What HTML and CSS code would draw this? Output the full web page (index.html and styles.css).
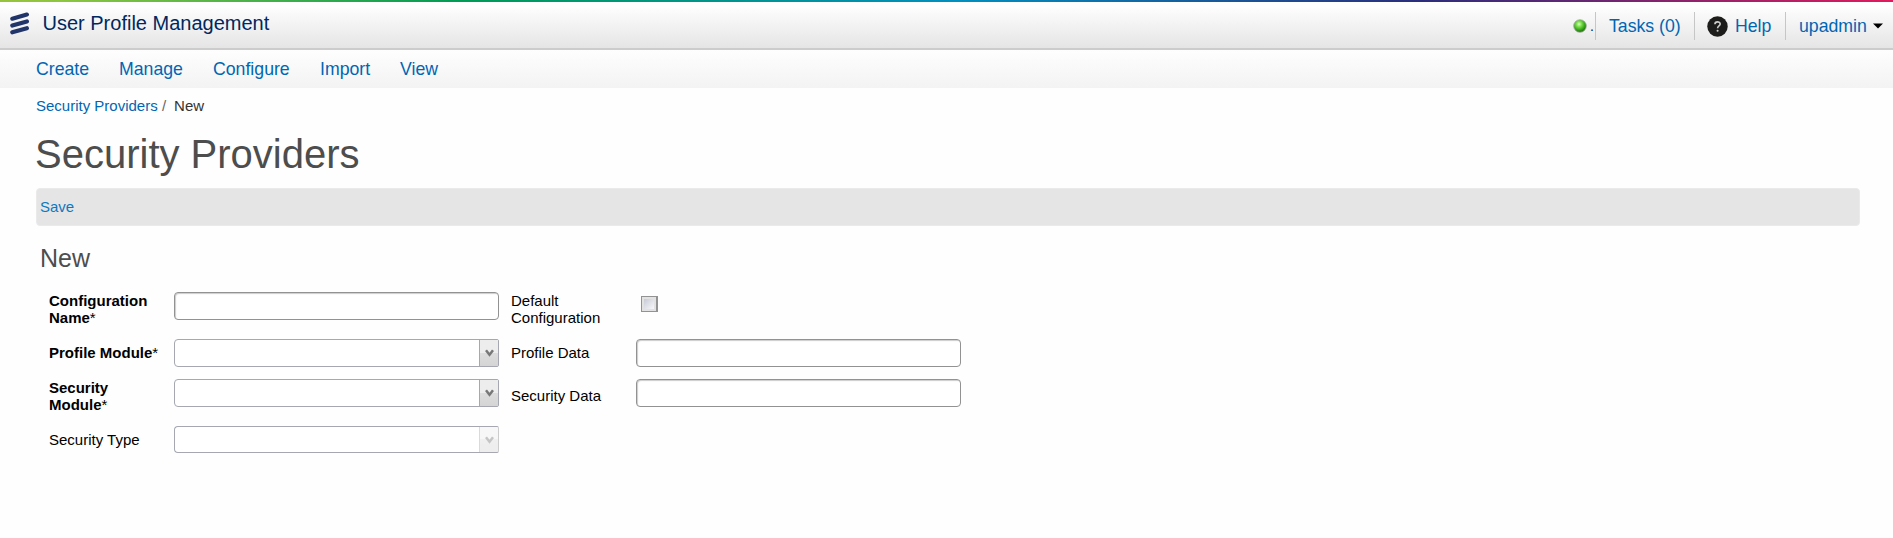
FILE: index.html
```html
<!DOCTYPE html>
<html lang="en">
<head>
<meta charset="utf-8">
<title>User Profile Management</title>
<link rel="stylesheet" href="styles.css">
</head>
<body>
<div class="rainbow"></div>
<header class="header">
  <svg class="logo" width="20" height="24" viewBox="0 0 20 24"><g stroke="#22356a" stroke-width="4.2" stroke-linecap="round"><path d="M2.3 6.7 16.9 2.6M2.3 13.5 16.9 9.4M2.3 20.3 16.9 16.2"/></g></svg>
  <span class="title">User Profile Management</span>
  <div class="tools">
    <svg class="status" width="14" height="14" viewBox="0 0 14 14">
      <defs><radialGradient id="led" cx=".42" cy=".35" r=".6"><stop offset="0" stop-color="#d8ffc0"/><stop offset=".35" stop-color="#7be04a"/><stop offset=".75" stop-color="#36a81c"/><stop offset="1" stop-color="#26770f"/></radialGradient></defs>
      <circle cx="7" cy="7" r="6.3" fill="url(#led)" stroke="#a3a8a0" stroke-width=".8"/>
    </svg>
    <span class="dot">.</span>
    <a class="tool tasks">Tasks (0)</a>
    <a class="tool help"><svg width="21" height="21" viewBox="0 0 22 22"><circle cx="11" cy="11" r="10.7" fill="#1d1d1b"/><path d="M8.3 8.6C8.3 5.4 13.8 5.4 13.8 8.5 13.8 10.4 11.1 10.5 11.1 12.8" fill="none" stroke="#ccc" stroke-width="1.7"/><circle cx="11.1" cy="15.4" r="1.1" fill="#ccc"/></svg><span>Help</span></a>
    <a class="tool user"><span>upadmin</span><svg width="10" height="6" viewBox="0 0 10 6"><path d="M0 .5h10L5 5.5z" fill="#000"/></svg></a>
  </div>
</header>
<nav class="nav">
  <a class="create">Create</a><a class="manage">Manage</a><a class="configure">Configure</a><a class="import">Import</a><a>View</a>
</nav>
<main class="main">
  <div class="crumbs"><a>Security Providers</a> <span class="slash">/</span><span class="current">New</span></div>
  <h1>Security Providers</h1>
  <div class="toolbar"><a>Save</a></div>
  <h2>New</h2>
  <form class="form">
    <label class="required">Configuration<br>Name<i>*</i></label>
    <input class="field" type="text">
    <label>Default<br>Configuration</label>
    <span class="check"></span>

    <label class="required middle">Profile Module<i>*</i></label>
    <div class="combo"><span class="arrow"><svg width="9" height="8" viewBox="0 0 9 8"><path d="M1 1.2 4.5 5.7 8 1.2" fill="none" stroke="#777" stroke-width="2.5"/></svg></span></div>
    <label class="middle">Profile Data</label>
    <input class="field" type="text">

    <label class="required">Security<br>Module<i>*</i></label>
    <div class="combo"><span class="arrow"><svg width="9" height="8" viewBox="0 0 9 8"><path d="M1 1.2 4.5 5.7 8 1.2" fill="none" stroke="#777" stroke-width="2.5"/></svg></span></div>
    <label class="lower">Security Data</label>
    <input class="field" type="text">

    <label class="middle">Security Type</label>
    <div class="combo disabled"><span class="arrow"><svg width="9" height="8" viewBox="0 0 9 8"><path d="M1 1.2 4.5 5.7 8 1.2" fill="none" stroke="#777" stroke-width="2.5"/></svg></span></div>
  </form>
</main>
</body>
</html>
```
FILE: styles.css
```css
* { box-sizing: border-box; }
body {
  margin: 0;
  background: #fefefe;
  color: #000;
  font: 15px/17px "Liberation Sans", Arial, sans-serif;
}
a { color: #0066b3; }
.rainbow {
  height: 2px;
  background: linear-gradient(90deg, #97c33c 0, #8dc63f 60px, #009b55 460px, #008fc0 960px, #2b2e7c 1420px, #5c2874 1560px, #e01b5d 1893px);
}
.header {
  height: 48px;
  display: flex;
  align-items: flex-start;
  padding: 10px 10px 0;
  border-bottom: 2px solid #ccc;
  background: linear-gradient(#fefefe 5px, #f9f9f9 12px, #e5e5e5 100%);
}
.title {
  margin-left: 12.5px;
  color: #00285f;
  font-size: 20px;
  line-height: 22px;
}
.tools {
  display: flex;
  align-items: flex-start;
  margin-left: auto;
  font-size: 17.7px;
  line-height: 28px;
}
.status { margin-top: 7px; }
.dot { width: 8px; padding-left: 3px; font-size: 14px; color: #00285f; }
.tool {
  display: flex;
  align-items: center;
  height: 28px;
  border-left: 1px solid #c6c6c6;
}
.tasks { width: 99px; padding-left: 13px; }
.help { width: 91px; padding-left: 12px; gap: 7px; }
.user { width: 98px; padding-left: 13px; justify-content: space-between; }
.nav {
  height: 38px;
  display: flex;
  padding: 8px 0 0 36px;
  background: linear-gradient(#fefefe, #f3f3f3);
  font-size: 17.7px;
  line-height: 22px;
}
.create { width: 83px; }
.manage { width: 94px; }
.configure { width: 107px; }
.import { width: 80px; }
.main { padding: 0 33px 0 36px; }
.crumbs { padding-top: 9px; height: 43px; color: #333; }
.crumbs .slash { color: #666; }
.crumbs .current { margin-left: 8px; }
h1 {
  margin: 0 0 0 -1px;
  height: 57px;
  color: #4d4d4d;
  font-size: 40px;
  font-weight: normal;
  line-height: 46px;
}
.toolbar {
  height: 38px;
  padding: 9px 4px;
  border: 1px solid #eaeaea;
  border-radius: 4px;
  background: #e5e5e5;
}
.toolbar a { margin-left: -1px; color: #0d7ac0; }
h2 {
  margin: 16px 0 0 4px;
  height: 50px;
  color: #4d4d4d;
  font-size: 25px;
  font-weight: normal;
  line-height: 32px;
}
.form {
  display: grid;
  grid-template-columns: 125px 337px 125px 325px;
  grid-template-rows: 47px 40px 47px 28px;
  align-items: start;
  margin-left: 13px;
}
.required { font-weight: bold; }
.required i { font-style: normal; font-weight: normal; }
.middle { padding-top: 5px; }
.lower { padding-top: 8px; }
.field {
  width: 325px;
  height: 28px;
  padding: 0 6px;
  border: 1px solid #929292;
  border-radius: 4px;
  background: #fff;
  box-shadow: inset 1px 1px 1px #ccc;
}
.check {
  width: 17px;
  height: 16px;
  margin: 4px 0 0 5px;
  border: 1px solid #929292;
  background: linear-gradient(135deg, #c7cbd5, #f8f8fa) content-box, #e2e2e2;
  padding: 2px;
  border-right-width: 2px;
}
.combo {
  width: 325px;
  height: 28px;
  display: flex;
  justify-content: flex-end;
  border: 1px solid #a5a7b1;
  border-radius: 4px 2px 2px 4px;
  background: #fff;
}
.arrow {
  width: 19px;
  display: flex;
  align-items: center;
  justify-content: center;
  border-left: 1px solid #a5a7b1;
  background: linear-gradient(#ededed 50%, #dcdcdc 50%, #d5d5d5);
}
.disabled { height: 27px; border-right-color: #ccc; }
.disabled .arrow { opacity: .42; }
```
